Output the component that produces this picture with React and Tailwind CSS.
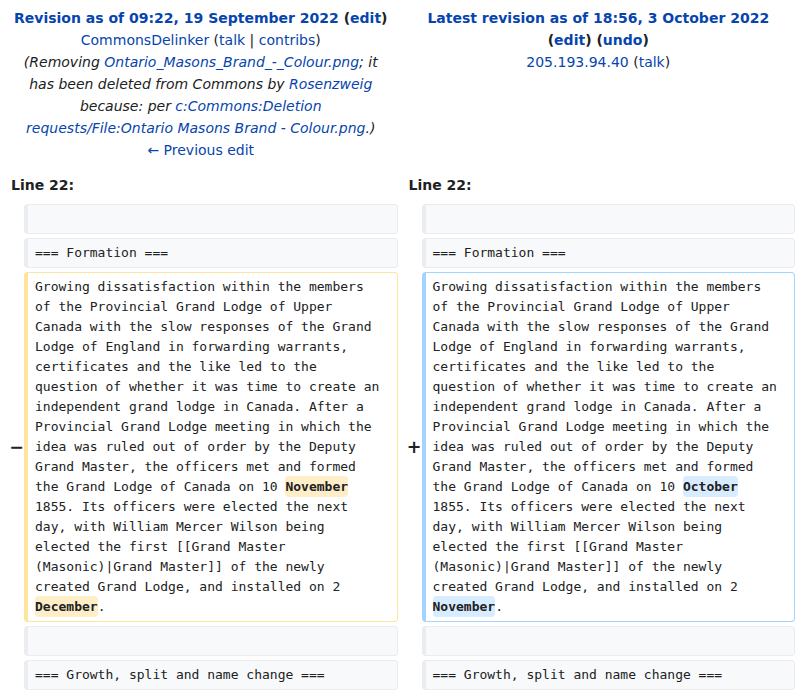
const link = "text-[#0645ad]";

const oldText = [
  "Growing dissatisfaction within the members of the Provincial Grand Lodge of Upper Canada with the slow responses of the Grand Lodge of England in forwarding warrants, certificates and the like led to the question of whether it was time to create an independent grand lodge in Canada. After a Provincial Grand Lodge meeting in which the idea was ruled out of order by the Deputy Grand Master, the officers met and formed the Grand Lodge of Canada on 10 ",
  "November",
  " 1855. Its officers were elected the next day, with William Mercer Wilson being elected the first [[Grand Master (Masonic)|Grand Master]] of the newly created Grand Lodge, and installed on 2 ",
  "December",
  ".",
];

const newText = [
  "Growing dissatisfaction within the members of the Provincial Grand Lodge of Upper Canada with the slow responses of the Grand Lodge of England in forwarding warrants, certificates and the like led to the question of whether it was time to create an independent grand lodge in Canada. After a Provincial Grand Lodge meeting in which the idea was ruled out of order by the Deputy Grand Master, the officers met and formed the Grand Lodge of Canada on 10 ",
  "October",
  " 1855. Its officers were elected the next day, with William Mercer Wilson being elected the first [[Grand Master (Masonic)|Grand Master]] of the newly created Grand Lodge, and installed on 2 ",
  "November",
  ".",
];

const Box = ({ kind = "context", children }) => {
  const styles = {
    context: "bg-[#f8f9fa] border-[#eaecf0]",
    deleted: "bg-white border-[#ffe49c]",
    added: "bg-white border-[#a3d3ff]",
  };
  return (
    <div
      className={`min-h-[30px] rounded-[4px] border border-l-4 ${styles[kind]} pl-[7px] pr-[14px] py-[4px] font-['DejaVu_Sans_Mono',monospace] text-[13px] leading-[20px] text-[#202122] whitespace-pre-wrap break-words`}
    >
      {children}
    </div>
  );
};

const Changed = ({ parts, mark }) =>
  parts.map((p, i) =>
    i % 2 === 1 ? (
      <span key={i} className={`font-bold rounded-[4px] py-[0.25em] ${mark}`}>
        {p}
      </span>
    ) : (
      <span key={i}>{p}</span>
    )
  );

const Marker = ({ sign }) => (
  <div className="mr-[-4px] flex items-center justify-end font-['DejaVu_Sans',sans-serif] text-[17.5px] font-bold leading-[21px] text-[#202122]">
    {sign}
  </div>
);

export default function App() {
  return (
    <div className="w-[799px] bg-white font-['DejaVu_Sans',sans-serif] text-[14px] text-[#202122]">
      <div className="grid grid-cols-[16px_1fr_16px_1fr] gap-x-1 px-1 pt-[7px]">
        <div className="col-span-2 px-[7px] text-center leading-[22px]">
          <div className="font-bold">
            <span className={link}>Revision as of 09:22, 19 September 2022</span> (<span className={link}>edit</span>)
          </div>
          <div>
            <span className={link}>CommonsDelinker</span> (<span className={link}>talk</span> | <span className={link}>contribs</span>)
          </div>
          <div className="italic">
            (Removing <span className={link}>Ontario_Masons_Brand_-_Colour.png</span>; it has been deleted from Commons by{" "}
            <span className={link}>Rosenzweig</span> because: per{" "}
            <span className={link}>c:Commons:Deletion requests/File:Ontario Masons Brand - Colour.png</span>.)
          </div>
          <div className={link}>← Previous edit</div>
        </div>
        <div className="col-span-2 px-[7px] text-center leading-[22px]">
          <div className="font-bold">
            <span className={link}>Latest revision as of 18:56, 3 October 2022</span>
          </div>
          <div className="font-bold">
            (<span className={link}>edit</span>) (<span className={link}>undo</span>)
          </div>
          <div>
            <span className={link}>205.193.94.40</span> (<span className={link}>talk</span>)
          </div>
        </div>

        <div className="col-span-2 mt-[13px] mb-[8px] px-[7px] font-bold leading-[22px]">Line 22:</div>
        <div className="col-span-2 mt-[13px] mb-[8px] px-[7px] font-bold leading-[22px]">Line 22:</div>
      </div>

      <div className="grid grid-cols-[16px_1fr_16px_1fr] gap-1 px-1">
        <div />
        <Box>{" "}</Box>
        <div />
        <Box>{" "}</Box>

        <div />
        <Box>=== Formation ===</Box>
        <div />
        <Box>=== Formation ===</Box>

        <Marker sign="−" />
        <Box kind="deleted">
          <Changed parts={oldText} mark="bg-[#feeec8]" />
        </Box>
        <Marker sign="+" />
        <Box kind="added">
          <Changed parts={newText} mark="bg-[#d8ecff]" />
        </Box>

        <div />
        <Box>{" "}</Box>
        <div />
        <Box>{" "}</Box>

        <div />
        <Box>=== Growth, split and name change ===</Box>
        <div />
        <Box>=== Growth, split and name change ===</Box>
      </div>
    </div>
  );
}
